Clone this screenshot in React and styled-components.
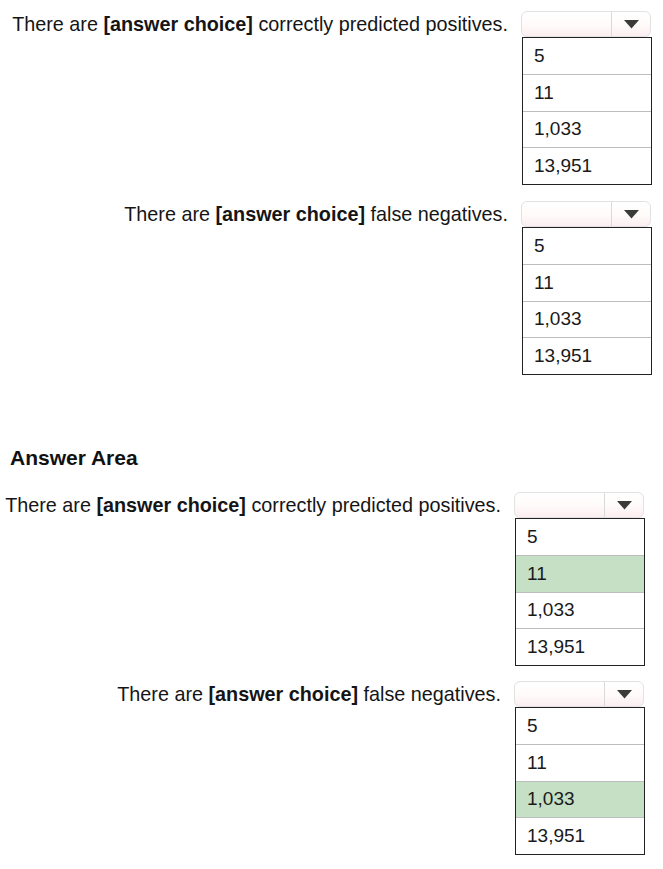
import React from "react";
import styled, { createGlobalStyle } from "styled-components";

const Global = createGlobalStyle`
  html, body { margin: 0; padding: 0; background: #ffffff; }
  body { font-family: "Liberation Sans", Arial, sans-serif; color: #151515; }
`;

const Page = styled.div`
  width: 663px;
  height: 869px;
  box-sizing: border-box;
  padding-top: 11px;
  display: flex;
  flex-direction: column;
`;

const Section = styled.div`
  display: flex;
  flex-direction: column;
  gap: ${(p) => p.$gap}px;
`;

const Heading = styled.h2`
  margin: 72px 0 23px 10px;
  font-size: 21px;
  line-height: 22px;
  font-weight: bold;
  color: #111;
`;

const Block = styled.div`
  display: grid;
  grid-template-columns: ${(p) => p.$textWidth}px 131px;
  column-gap: 13px;
  align-items: start;
`;

const Prompt = styled.div`
  height: 26px;
  display: flex;
  align-items: center;
  justify-content: flex-end;
  font-size: 19.8px;
  white-space: nowrap;
`;

const Strong = styled.b`
  font-weight: bold;
`;

const Dropdown = styled.div`
  display: flex;
  flex-direction: column;
`;

const Select = styled.div`
  width: 130px;
  height: 26px;
  box-sizing: border-box;
  border: 1px solid #e2e2e2;
  border-radius: 6px;
  background: linear-gradient(#ffffff 0%, #fffafa 55%, #fbeef0 100%);
  display: grid;
  grid-template-columns: 89px 1fr;
`;

const SelectButton = styled.div`
  border-left: 1px solid #d9d9d9;
  display: flex;
  align-items: center;
  justify-content: center;
`;

const List = styled.div`
  margin-left: 1px;
  width: 130px;
  height: 148px;
  box-sizing: border-box;
  border: 1px solid #222;
  display: flex;
  flex-direction: column;
`;

const Option = styled.div`
  flex: 1;
  display: flex;
  align-items: center;
  padding-left: 11px;
  font-size: 19px;
  color: #1a1a1a;
  background: ${(p) => (p.$selected ? "#c5e0c4" : "#ffffff")};
  & + & {
    border-top: 1px solid #bdbdbd;
  }
`;

const options = ["5", "11", "1,033", "13,951"];

function Arrow() {
  return (
    <svg width="15" height="9" viewBox="0 0 15 9">
      <polygon points="0,0 15,0 7.5,8.5" fill="#3a3a3a" />
    </svg>
  );
}

function Question({ textWidth, before, after, selected }) {
  return (
    <Block $textWidth={textWidth}>
      <Prompt>
        {before}&nbsp;<Strong>[answer choice]</Strong>&nbsp;{after}
      </Prompt>
      <Dropdown>
        <Select>
          <div />
          <SelectButton>
            <Arrow />
          </SelectButton>
        </Select>
        <List>
          {options.map((o) => (
            <Option key={o} $selected={o === selected}>
              {o}
            </Option>
          ))}
        </List>
      </Dropdown>
    </Block>
  );
}

export default function App() {
  return (
    <>
      <Global />
      <Page>
        <Section $gap={16}>
          <Question textWidth={508} before="There are" after="correctly predicted positives." />
          <Question textWidth={508} before="There are" after="false negatives." />
        </Section>
        <Heading>Answer Area</Heading>
        <Section $gap={15}>
          <Question textWidth={501} before="There are" after="correctly predicted positives." selected="11" />
          <Question textWidth={501} before="There are" after="false negatives." selected="1,033" />
        </Section>
      </Page>
    </>
  );
}
